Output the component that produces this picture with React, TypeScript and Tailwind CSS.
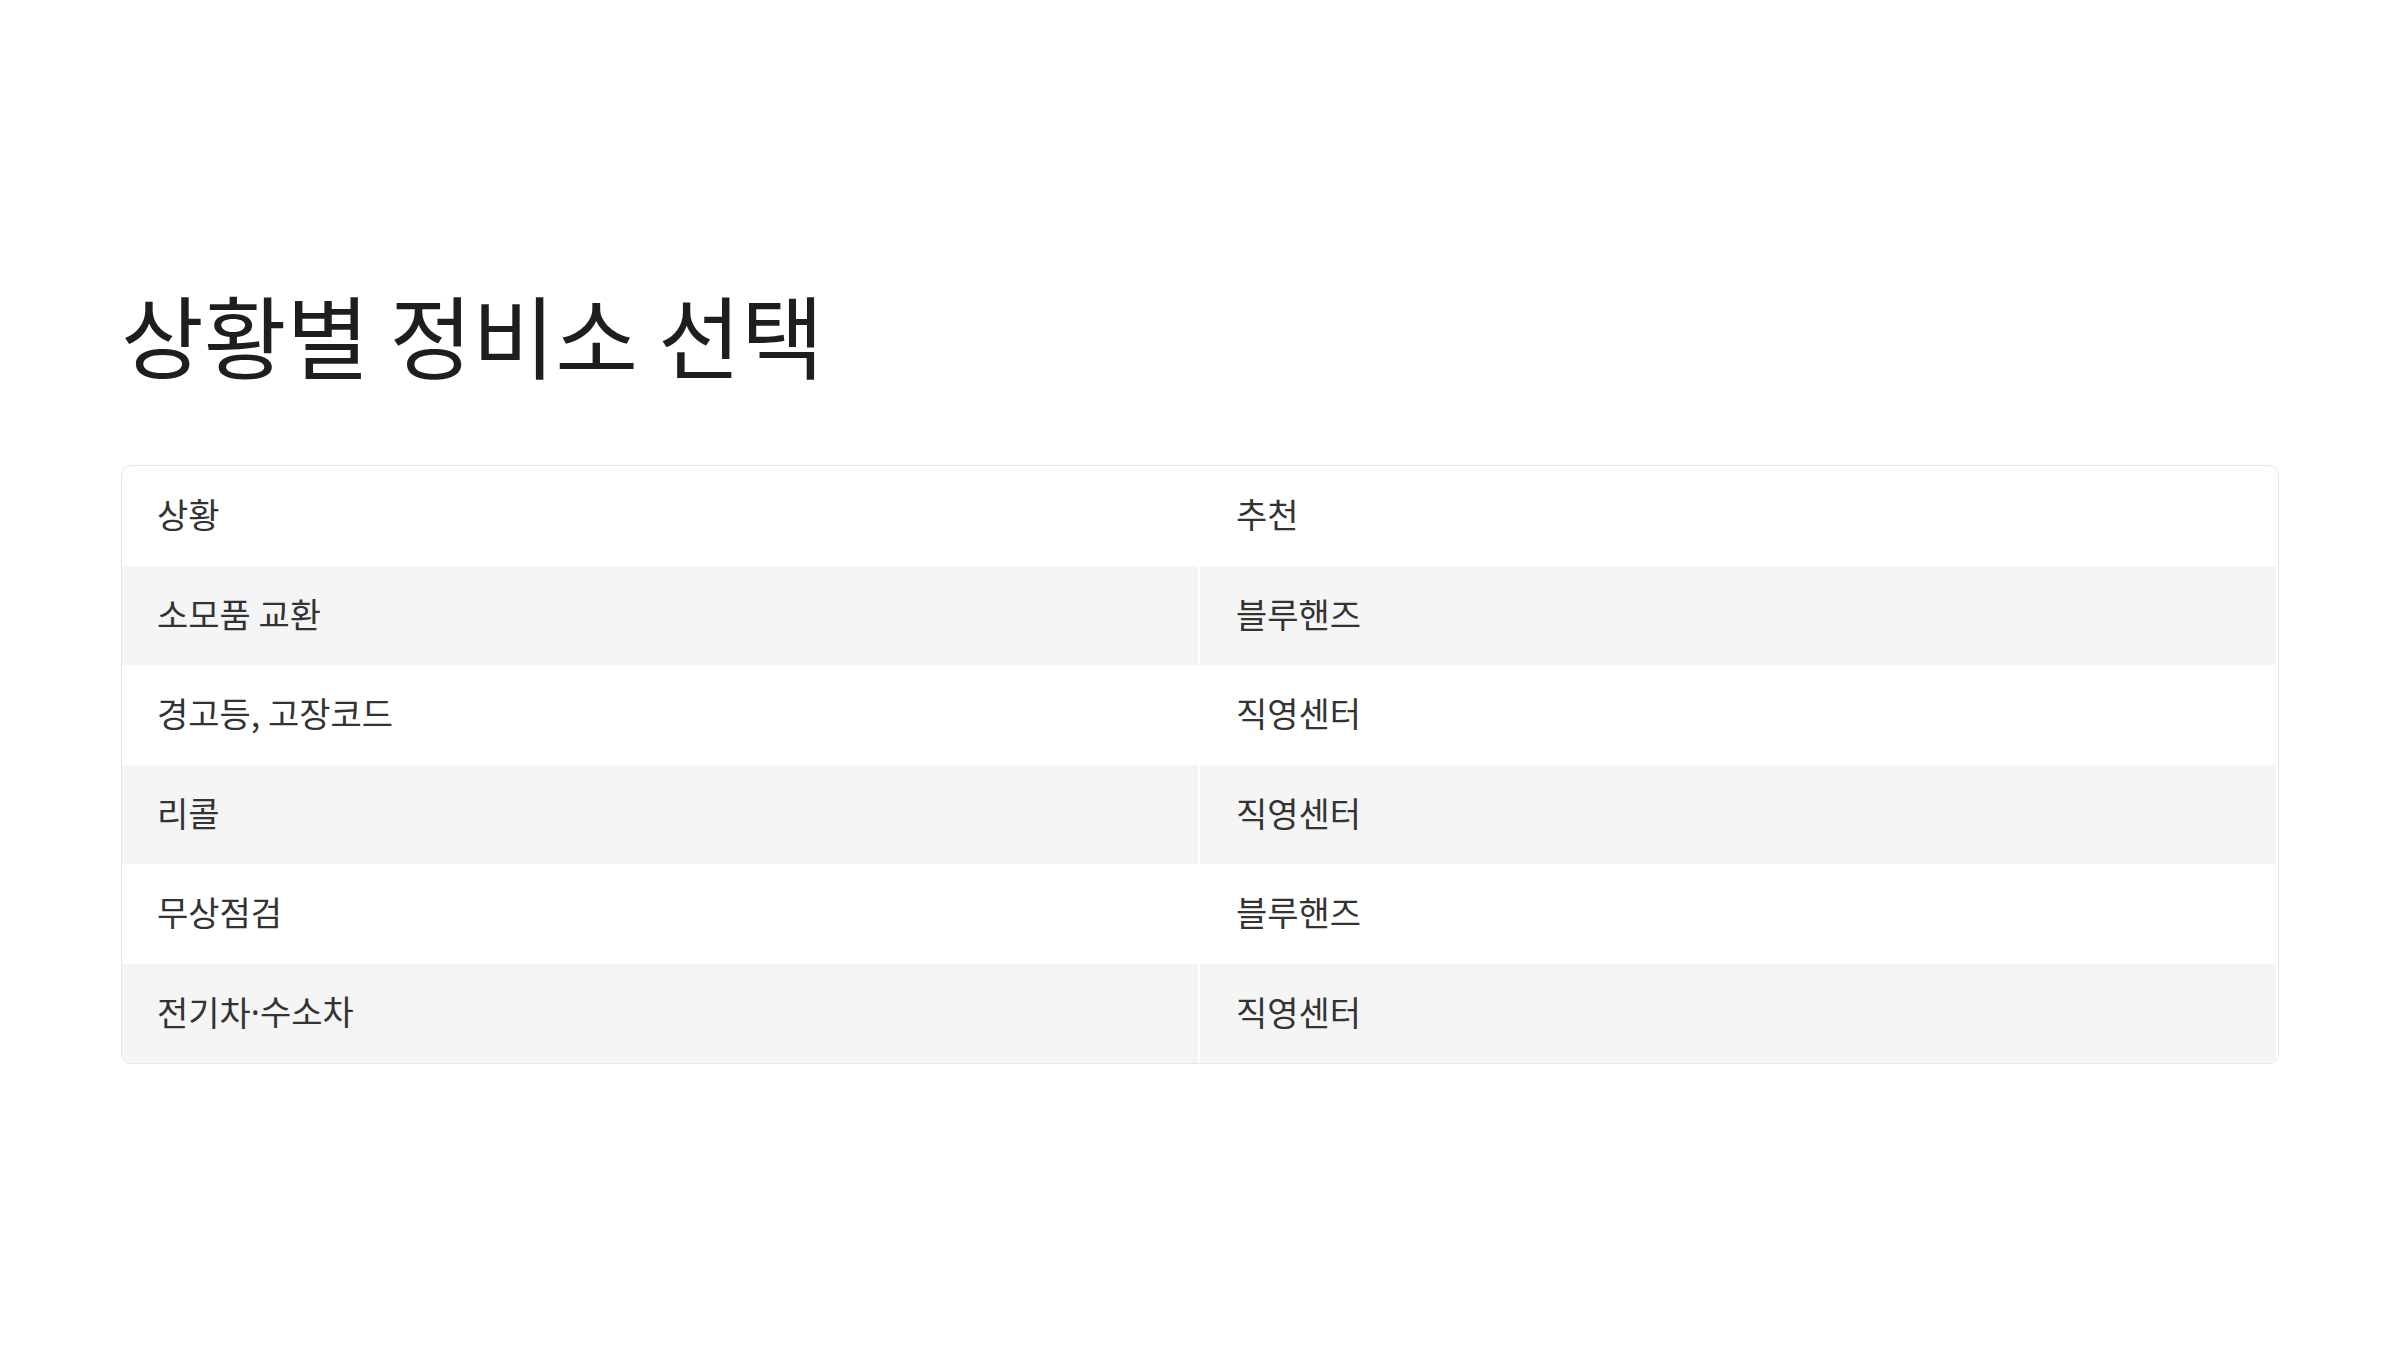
const rows = [
  { situation: ['소모품 교환'], pick: '블루핸즈' },
  { situation: ['경고등, 고장코드'], pick: '직영센터' },
  { situation: ['리콜'], pick: '직영센터' },
  { situation: ['무상점검'], pick: '블루핸즈' },
  { situation: ['전기차', '수소차'], pick: '직영센터' },
];

export default function App() {
  return (
    <div
      className="min-h-screen w-full bg-white px-[121px] pt-[279px]"
      style={{ fontFamily: '"Noto Sans CJK KR", "Noto Sans", sans-serif' }}
    >
      <h1 className="text-[90px] leading-[1.2] font-normal text-[#1e1e1e]">상황별 정비소 선택</h1>

      <div className="mt-[78px] overflow-hidden rounded-[10px] border border-[#e6e6e6] bg-white">
        {/* Header */}
        <div className="grid h-[99.5px] grid-cols-2 text-[34px] text-[#333333]">
          <div className="flex items-center border-r-2 border-white pb-[4px] pl-[35px]">상황</div>
          <div className="flex items-center border-r-2 border-white pb-[4px] pl-[36px]">추천</div>
        </div>

        {/* Rows */}
        {rows.map((row, i) => (
          <div
            key={row.situation.join('·')}
            className={`grid h-[99.5px] grid-cols-2 text-[34px] text-[#333333] ${
              i % 2 === 0 ? 'bg-[#f5f5f5]' : 'bg-white'
            }`}
          >
            <div className="flex items-center border-r-2 border-white pb-[4px] pl-[35px]">
              {row.situation.map((part, j) => (
                <span key={part}>
                  {j > 0 && <span className="font-['Noto_Sans',sans-serif]">·</span>}
                  {part}
                </span>
              ))}
            </div>
            <div className="flex items-center border-r-2 border-white pb-[4px] pl-[36px]">
              {row.pick}
            </div>
          </div>
        ))}
      </div>
    </div>
  );
}
